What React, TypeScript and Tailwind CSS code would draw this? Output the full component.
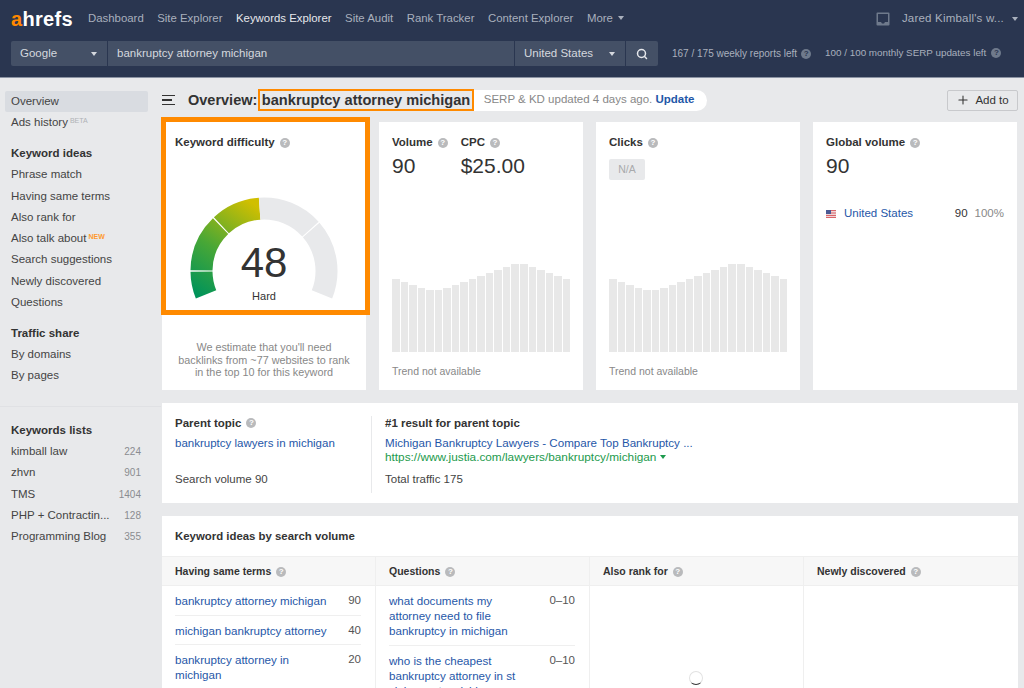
import React from "react";
import { Search, Plus } from "lucide-react";

const navItems = ["Dashboard", "Site Explorer", "Keywords Explorer", "Site Audit", "Rank Tracker", "Content Explorer"];
const barHeights = [73, 70, 67, 64, 62, 62, 64, 67, 70, 73, 76, 79, 82, 85, 88, 88, 85, 82, 79, 76, 73];
const keywordIdeas = ["Phrase match", "Having same terms", "Also rank for", "Also talk about", "Search suggestions", "Newly discovered", "Questions"];
const lists = [
  { name: "kimball law", count: 224 },
  { name: "zhvn", count: 901 },
  { name: "TMS", count: 1404 },
  { name: "PHP + Contractin...", count: 128 },
  { name: "Programming Blog", count: 355 },
];

const Help = ({ dark }: { dark?: boolean }) => (
  <span
    className={`inline-flex h-[10px] w-[10px] shrink-0 items-center justify-center rounded-full text-[8px] font-bold leading-none ${
      dark ? "bg-[#6f7a8c] text-[#2a3650]" : "bg-[#b9babc] text-white"
    }`}
  >
    ?
  </span>
);

const Caret = ({ className }: { className: string }) => (
  <span className={`inline-block h-0 w-0 border-x-[3.5px] border-t-[4px] border-x-transparent ${className}`} />
);

const polar = (r: number, deg: number) => {
  const a = (deg * Math.PI) / 180;
  return `${75 + r * Math.cos(a)} ${75 - r * Math.sin(a)}`;
};

const arc = (from: number, to: number) => {
  const big = Math.abs(from - to) > 180 ? 1 : 0;
  return `M${polar(73.5, from)} A73.5 73.5 0 ${big} 1 ${polar(73.5, to)} L${polar(51.5, to)} A51.5 51.5 0 ${big} 0 ${polar(51.5, from)} Z`;
};

const Gauge = () => (
  <svg width="150" height="104" viewBox="0 0 150 104" className="block">
    <defs>
      <linearGradient id="kd" gradientUnits="userSpaceOnUse" x1="10" y1="100" x2="70" y2="12">
        <stop offset="0" stopColor="#00935a" />
        <stop offset="0.45" stopColor="#48a736" />
        <stop offset="1" stopColor="#d0bf00" />
      </linearGradient>
    </defs>
    <path d={arc(202, 180.5)} fill="url(#kd)" />
    <path d={arc(179.5, 134)} fill="url(#kd)" />
    <path d={arc(133, 94)} fill="url(#kd)" />
    <path d={arc(94, 42)} fill="#e8e9eb" />
    <path d={arc(41, -22)} fill="#e8e9eb" />
  </svg>
);

const Bars = () => (
  <div className="flex h-[88px] items-end gap-px">
    {barHeights.map((h, i) => (
      <div key={i} className="flex-1 bg-[#e8e8e8]" style={{ height: h }} />
    ))}
  </div>
);

const Flag = () => (
  <svg width="10" height="8" viewBox="0 0 10 8" className="shrink-0">
    <rect width="10" height="8" fill="#f3f3f3" />
    <rect width="10" height="1.2" fill="#d9656b" />
    <rect y="2.4" width="10" height="1.2" fill="#d9656b" />
    <rect y="4.8" width="10" height="1.2" fill="#d9656b" />
    <rect y="6.8" width="10" height="1.2" fill="#d9656b" />
    <rect width="5" height="4" fill="#4a5a94" />
  </svg>
);

const TrayIcon = () => (
  <svg width="14" height="14" viewBox="0 0 14 14" className="mr-[12px]">
    <path
      fillRule="evenodd"
      d="M1.5 0.5h11a1 1 0 0 1 1 1v11a1 1 0 0 1-1 1h-11a1 1 0 0 1-1-1v-11a1 1 0 0 1 1-1zM2 2v8h3l1 1.5h2l1-1.5h3v-8z"
      fill="#6f7a8c"
    />
  </svg>
);

const KeywordRow = ({ text, value, wide, last }: { text: string; value: string; wide?: boolean; last?: boolean }) => (
  <div className={`flex items-start justify-between pt-[7px] pb-[6.6px] ${last ? "" : "border-b border-[#efefef]"}`}>
    <a className={`text-[11.6px] leading-[15px] text-[#1f57a8] ${wide ? "w-[155px]" : "w-[140px]"}`}>{text}</a>
    <span className="text-[11.5px] leading-[15px] text-[#555]">{value}</span>
  </div>
);

export default function App() {
  return (
    <div className="flex h-[688px] w-[1024px] flex-col overflow-hidden bg-[#e8e9eb] font-['Liberation_Sans',Arial,sans-serif] text-[#333]">
      <header className="h-[78px] shrink-0 border-b border-[#8b93a3] bg-[#2a3650] pl-[11px]">
        <div className="flex h-[41px] items-center pb-[4px]">
          <div className="w-[77px] text-[20px] font-bold leading-none tracking-[0.3px] text-white">
            <span className="text-[#ff8800]">a</span>hrefs
          </div>
          <nav className="flex items-center gap-[13.5px] text-[11.4px] text-[#a9b0bd]">
            {navItems.map((n) => (
              <span key={n} className={n === "Keywords Explorer" ? "text-[#e6e8ec]" : ""}>
                {n}
              </span>
            ))}
            <span className="flex items-center gap-[5px]">
              More <Caret className="border-t-[#a9b0bd]" />
            </span>
          </nav>
          <div className="ml-auto flex items-center pr-[6px] text-[11.5px] text-[#a9b0bd]">
            <TrayIcon />
            <span className="tracking-[0.2px]">Jared Kimball's w...</span>
            <Caret className="ml-[8px] border-t-[#a9b0bd]" />
          </div>
        </div>
        <div className="flex h-[25px] items-center text-[11.5px]">
          <div className="flex h-full w-[96px] items-center justify-between rounded-l-[2px] bg-[#445066] pl-[9px] pr-[10px] pt-[1px] text-[#d5d8de]">
            Google <Caret className="border-t-[#d5d8de]" />
          </div>
          <div className="ml-px flex h-full w-[406px] items-center bg-[#445066] pl-[9px] pt-[1px] text-[#d5d8de]">bankruptcy attorney michigan</div>
          <div className="ml-px flex h-full w-[110px] items-center justify-between bg-[#445066] pl-[9px] pr-[10px] pt-[1px] text-[#d5d8de]">
            United States <Caret className="border-t-[#d5d8de]" />
          </div>
          <div className="ml-px flex h-full w-[32px] items-center justify-center rounded-r-[2px] bg-[#445066] text-[#e6e8ec]">
            <Search size={12} strokeWidth={3} />
          </div>
          <div className="ml-[14px] flex items-center gap-[4px] text-[10px] text-[#a9b0bd]">
            167 / 175 weekly reports left <Help dark />
          </div>
          <div className="ml-[14px] flex items-center gap-[5px] text-[9.85px] text-[#a9b0bd]">
            100 / 100 monthly SERP updates left <Help dark />
          </div>
        </div>
      </header>

      <div className="flex min-h-0 flex-1">
        <aside className="w-[161px] shrink-0 pt-[13px] text-[11.5px] leading-[21.25px] text-[#444]">
          <div className="mx-[5px] w-[143px] rounded-[2px] bg-[#d9dce1] pl-[6px]">Overview</div>
          <div className="pl-[11px]">
            Ads history<sup className="ml-[2px] text-[7px] text-[#b0b2b6]">BETA</sup>
          </div>
          <div className="mt-[9.5px] pl-[11px] font-bold text-[#333]">Keyword ideas</div>
          {keywordIdeas.map((k) => (
            <div key={k} className="pl-[11px]">
              {k}
              {k === "Also talk about" && <sup className="ml-[2px] text-[7px] font-bold text-[#ff9a2e]">NEW</sup>}
            </div>
          ))}
          <div className="mt-[9.5px] pl-[11px] font-bold text-[#333]">Traffic share</div>
          <div className="pl-[11px]">By domains</div>
          <div className="pl-[11px]">By pages</div>
          <div className="mb-[13px] mt-[20px] border-t border-[#e0e1e4]" />
          <div className="h-[21px] pl-[11px] font-bold text-[#333]">Keywords lists</div>
          {lists.map((l) => (
            <div key={l.name} className="flex h-[21.2px] justify-between pl-[11px] pr-[20px]">
              <span>{l.name}</span>
              <span className="text-[10px] text-[#8a8c90]">{l.count}</span>
            </div>
          ))}
        </aside>

        <main className="relative min-w-0 flex-1 pr-[6px] pt-[11px]">
          <div className="flex h-[22px] items-center pl-px">
            <span className="flex w-[13px] flex-col gap-[3px]">
              <span className="h-[1.5px] w-[13px] bg-[#333]" />
              <span className="h-[1.5px] w-[10px] bg-[#333]" />
              <span className="h-[1.5px] w-[13px] bg-[#333]" />
            </span>
            <h1 className="ml-[13px] whitespace-nowrap pt-[1px] text-[14.5px] font-bold text-[#333]">Overview:</h1>
            <span className="ml-[1px] flex h-[22px] items-center border-2 border-[#ff8a00] px-[1.5px] pt-[1px] text-[14.6px] font-bold text-[#333]">
              bankruptcy attorney michigan
            </span>
            <span className="flex h-[21px] w-[233px] items-center rounded-r-full bg-white pl-[10px] text-[11.5px] text-[#888]">
              SERP &amp; KD updated 4 days ago.&nbsp;<b className="text-[#1f57a8]">Update</b>
            </span>
            <button className="ml-auto flex h-[21px] w-[71px] items-center justify-center gap-[5px] rounded-[2px] border border-[#c8c9cc] text-[11.5px] text-[#333]">
              <Plus size={14} strokeWidth={1.8} /> <span className="pt-[1px]">Add to</span>
            </button>
          </div>

          <div className="mt-[11px] grid h-[268px] grid-cols-[204px_204px_204px_204px] gap-x-[13px] pl-px">
            <section className="relative bg-white px-[13px] pt-[12px]">
              <div className="flex items-center gap-[5px] text-[11.5px] font-bold">
                Keyword difficulty <Help />
              </div>
              <div className="relative ml-[14px] mt-[45px]">
                <Gauge />
                <div className="absolute left-0 top-[46px] w-[150px] text-center text-[42px] leading-none text-[#333]">48</div>
                <div className="absolute left-0 top-[92px] w-[150px] text-center text-[11px] text-[#333]">Hard</div>
              </div>
              <p className="mt-[41px] px-[2px] text-center text-[10.8px] leading-[12.3px] text-[#888]">
                We estimate that you'll need backlinks from ~77 websites to rank in the top 10 for this keyword
              </p>
              <div className="absolute left-[-1px] top-[-5px] h-[198px] w-[209px] border-[5px] border-[#ff8a00]" />
            </section>

            <section className="flex flex-col bg-white px-[13px] pt-[12px]">
              <div className="flex gap-[13px]">
                <div>
                  <div className="flex items-center gap-[5px] text-[11.5px] font-bold">
                    Volume <Help />
                  </div>
                  <div className="mt-[1px] text-[21px] leading-[27px]">90</div>
                </div>
                <div>
                  <div className="flex items-center gap-[5px] text-[11.5px] font-bold">
                    CPC <Help />
                  </div>
                  <div className="mt-[1px] text-[21px] leading-[27px]">$25.00</div>
                </div>
              </div>
              <div className="mt-auto">
                <Bars />
                <div className="mb-[10px] mt-[12px] text-[10.5px] text-[#888]">Trend not available</div>
              </div>
            </section>

            <section className="flex flex-col bg-white px-[13px] pt-[12px]">
              <div className="flex items-center gap-[5px] text-[11.5px] font-bold">
                Clicks <Help />
              </div>
              <div className="mt-[8px] flex h-[21px] w-[36px] items-center justify-center rounded-[2px] bg-[#e8e9eb] text-[10.5px] text-[#a8a9ac]">N/A</div>
              <div className="mt-auto">
                <Bars />
                <div className="mb-[10px] mt-[12px] text-[10.5px] text-[#888]">Trend not available</div>
              </div>
            </section>

            <section className="bg-white px-[13px] pt-[12px]">
              <div className="flex items-center gap-[5px] text-[11.5px] font-bold">
                Global volume <Help />
              </div>
              <div className="mt-[1px] text-[21px] leading-[27px]">90</div>
              <div className="mt-[26px] flex items-center text-[11.5px]">
                <Flag />
                <a className="ml-[8px] text-[#1f57a8]">United States</a>
                <span className="ml-auto">90</span>
                <span className="ml-[7px] text-[#888]">100%</span>
              </div>
            </section>
          </div>

          <section className="ml-px mt-[13px] flex h-[100px] bg-white pt-[12.5px] text-[11.5px] leading-[15px]">
            <div className="h-[77px] w-[210px] border-r border-[#e8e9eb] pl-[13px]">
              <div className="flex items-center gap-[5px] font-bold">
                Parent topic <Help />
              </div>
              <a className="mt-[5px] block text-[#1f57a8]">bankruptcy lawyers in michigan</a>
              <div className="mt-[21px] text-[#444]">Search volume 90</div>
            </div>
            <div className="pl-[13px]">
              <div className="font-bold">#1 result for parent topic</div>
              <a className="mt-[4px] block text-[11.6px] text-[#1f57a8]">Michigan Bankruptcy Lawyers - Compare Top Bankruptcy ...</a>
              <div className="flex items-center gap-[4px] text-[11.8px] text-[#1c9a4c]">
                https://www.justia.com/lawyers/bankruptcy/michigan <Caret className="border-t-[#1c9a4c]" />
              </div>
              <div className="mt-[7px] text-[#444]">Total traffic 175</div>
            </div>
          </section>

          <section className="ml-px mt-[13px] h-[300px] bg-white">
            <div className="flex h-[40px] items-center pl-[13px] pt-[1px] text-[11.4px] font-bold">Keyword ideas by search volume</div>
            <div className="grid h-[260px] grid-cols-4 text-[11px]">
              {["Having same terms", "Questions", "Also rank for", "Newly discovered"].map((title, i) => (
                <div key={title} className={i < 3 ? "border-r border-[#efefef]" : ""}>
                  <div className="flex h-[30px] items-center gap-[5px] border-y border-[#efefef] bg-[#f7f7f7] pl-[13px] pt-[1px] text-[10.5px] font-bold">
                    {title} <Help />
                  </div>
                  {i === 0 && (
                    <div className="pl-[13px] pr-[14px]">
                      <KeywordRow wide text="bankruptcy attorney michigan" value="90" />
                      <KeywordRow wide text="michigan bankruptcy attorney" value="40" />
                      <KeywordRow wide last text="bankruptcy attorney in michigan" value="20" />
                    </div>
                  )}
                  {i === 1 && (
                    <div className="pl-[13px] pr-[14px]">
                      <KeywordRow text="what documents my attorney need to file bankruptcy in michigan" value="0–10" />
                      <KeywordRow last text="who is the cheapest bankruptcy attorney in st clair county michigan" value="0–10" />
                    </div>
                  )}
                  {i === 2 && (
                    <div className="ml-[99px] mt-[85px] h-[14px] w-[14px] rounded-full border border-[#e2e2e2] border-b-[#333]" />
                  )}
                </div>
              ))}
            </div>
          </section>
        </main>
      </div>
    </div>
  );
}
